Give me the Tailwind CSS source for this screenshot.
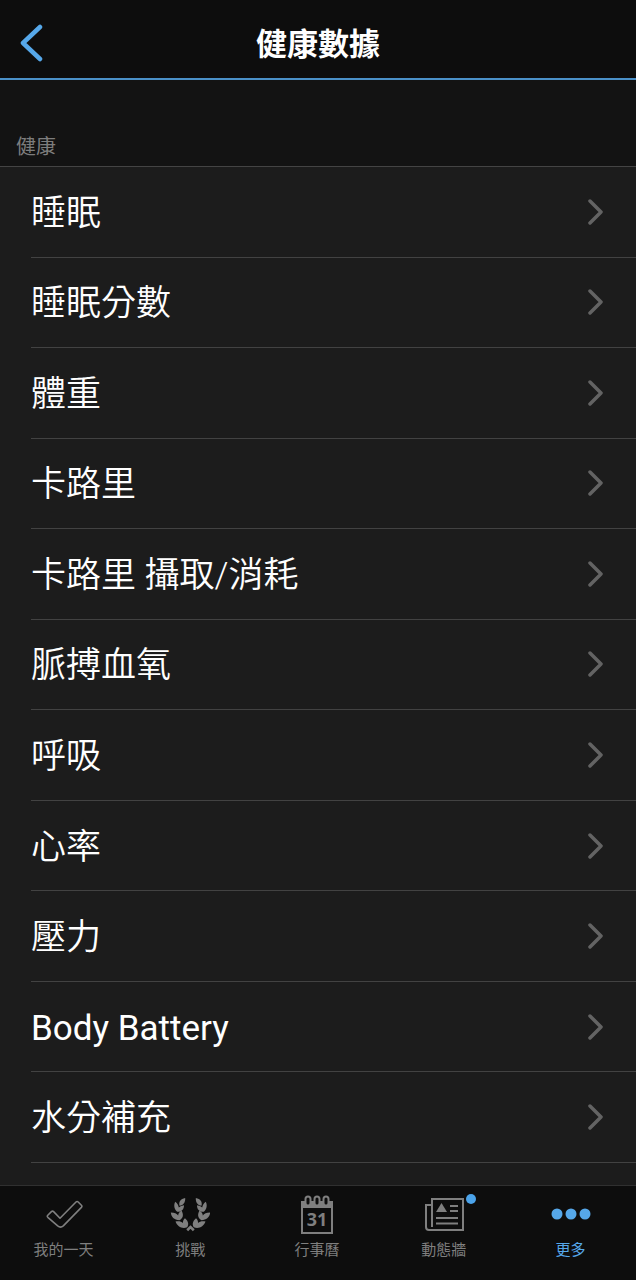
<!DOCTYPE html>
<html lang="zh-Hant">
<head>
    <meta charset="UTF-8">
    <meta name="viewport" content="width=device-width, initial-scale=1.0">
    <title>健康數據</title>
    <script src="https://cdn.jsdelivr.net/npm/@tailwindcss/browser@4"></script>
</head>
<body class="bg-[#1c1c1c] text-white min-h-screen flex flex-col font-[Roboto,'Noto_Sans_CJK_TC',sans-serif]">
    <header class="h-20 shrink-0 bg-[#0d0d0d] border-b-2 border-[#4a90c8] grid grid-cols-[1fr_auto_1fr] items-center pt-2 px-5">
        <button type="button" aria-label="返回" class="justify-self-start text-[#56a8ea]">
            <svg class="w-6 h-10" viewBox="0 0 24 40" fill="none" stroke="currentColor" stroke-width="4.5" stroke-linecap="round" stroke-linejoin="round">
                <path d="M20 4L3 20L20 36" />
            </svg>
        </button>
        <h1 class="text-[31px] leading-10 font-bold pt-1">健康數據</h1>
    </header>

    <main class="flex-1 flex flex-col">
        <h2 class="bg-[#131313] border-b border-[#444444] text-[#7d7d7d] text-xl leading-6 px-4 pt-[55px] pb-[7px]">健康</h2>
        <ul id="healthList" class="flex-1 grid auto-rows-fr pl-[31px] pb-[22px]"></ul>
    </main>

    <nav class="h-[95px] shrink-0 bg-[#0d0d0d] border-t border-[#303030] grid grid-cols-5 pr-0.5 text-[#7f7f7f] text-[15px] leading-5">
        <a href="#" class="flex flex-col items-center gap-[5px] pt-[9px]">
            <svg class="w-10 h-10" viewBox="0 0 40 40" fill="none" stroke="currentColor" stroke-width="1.6" stroke-linejoin="round">
                <path d="M4.8 20.2L8.4 16.6Q9.5 15.6 10.6 16.6L17 23.2L33 7Q34.1 6 35.2 7L38.4 10.2Q39.4 11.3 38.4 12.4L20.3 30.9Q17.5 33.2 14.7 30.9L4.8 22.3Q3.8 21.3 4.8 20.2Z" />
            </svg>
            <span>我的一天</span>
        </a>
        <a href="#" class="flex flex-col items-center gap-[5px] pt-[9px]">
            <svg class="w-10 h-10" viewBox="0 0 40 40" fill="currentColor">
                <g id="branch">
                    <path d="M15.2 3C10.5 4 8.5 6.5 9.5 10.8C13.5 10.5 15.5 7 15.2 3Z" />
                    <path d="M5.2 6.8C3.6 10 4 14 7.2 16.8C11.5 17 14 14.5 14 10.2C11 10.8 9.6 11.6 8.8 12.6C8.5 10.8 7.5 8.3 5.2 6.8Z" />
                    <path d="M0.8 17.5C1.2 21.8 4 25 9.5 25.2C13 23.5 14 20 11.6 15.5C9 17.2 8.2 18.8 8.2 20.6C6.8 18.6 4.5 17.5 0.8 17.5Z" />
                    <path d="M5.5 26.5C7.5 31.5 12 34.3 17.2 32.3C19 29.5 18.5 26.5 15 23.3C13.4 24.7 12.8 26.4 13 28C11.2 26.4 9 26 5.5 26.5Z" />
                </g>
                <use href="#branch" transform="translate(41 0) scale(-1 1)" />
                <path d="M17.2 35.2L20.5 32L23.8 35.2" fill="none" stroke="currentColor" stroke-width="2.6" />
            </svg>
            <span>挑戰</span>
        </a>
        <a href="#" class="flex flex-col items-center gap-[5px] pt-[9px]">
            <svg class="w-10 h-10" viewBox="0 0 40 40" fill="none" stroke="currentColor">
                <path d="M5 12V38H35V12" stroke-width="2" />
                <path d="M4 6H36V13H4Z" fill="currentColor" stroke="none" />
                <g fill="#0d0d0d" stroke-width="2">
                    <rect x="8.5" y="1.5" width="5" height="9" rx="2.5" />
                    <rect x="17.5" y="1.5" width="5" height="9" rx="2.5" />
                    <rect x="26.5" y="1.5" width="5" height="9" rx="2.5" />
                </g>
                <text x="20" y="31" text-anchor="middle" font-size="18" font-weight="700" font-family="Open Sans, sans-serif" fill="currentColor" stroke="none">31</text>
            </svg>
            <span>行事曆</span>
        </a>
        <a href="#" class="flex flex-col items-center gap-[5px] pt-[9px]">
            <span class="relative">
                <svg class="w-10 h-10" viewBox="0 0 40 40" fill="none" stroke="currentColor" stroke-width="2">
                    <path d="M8 32V4H39V35H5Q2 35 2 32V10H8" />
                    <path d="M26 11H34M26 16H34M12 23H34M12 28.5H34" />
                    <path d="M12 17L17.5 8L23 17Z" fill="currentColor" stroke="none" />
                </svg>
                <span class="absolute -right-3 -top-px size-[10px] rounded-full bg-[#4ba3ea]"></span>
            </span>
            <span>動態牆</span>
        </a>
        <a href="#" aria-current="page" class="flex flex-col items-center gap-[5px] pt-[9px] text-[#56a8ea]">
            <svg class="w-10 h-10" viewBox="0 0 40 40" fill="currentColor">
                <circle cx="6" cy="19" r="5.5" />
                <circle cx="20" cy="19" r="5.5" />
                <circle cx="34" cy="19" r="5.5" />
            </svg>
            <span>更多</span>
        </a>
    </nav>

    <script>
        const items = ['睡眠', '睡眠分數', '體重', '卡路里', '卡路里 攝取/消耗', '脈搏血氧', '呼吸', '心率', '壓力', 'Body Battery', '水分補充'];

        // Latin names need the regular weight, the Chinese ones look better a bit lighter
        document.getElementById('healthList').innerHTML = items.map(item => `
            <li class="border-b border-[#424242]">
                <a href="#" class="h-full flex items-center justify-between pr-8 text-[35px] leading-[50px] ${/[a-z]/i.test(item) ? 'font-normal' : 'font-[350]'}">
                    <span class="pt-1">${item}</span>
                    <svg class="w-4 h-7" viewBox="0 0 16 28" fill="none" stroke="#636363" stroke-width="3.5" stroke-linecap="round" stroke-linejoin="round">
                        <path d="M2 3L13 14L2 25" />
                    </svg>
                </a>
            </li>
        `).join('');
    </script>
</body>
</html>
